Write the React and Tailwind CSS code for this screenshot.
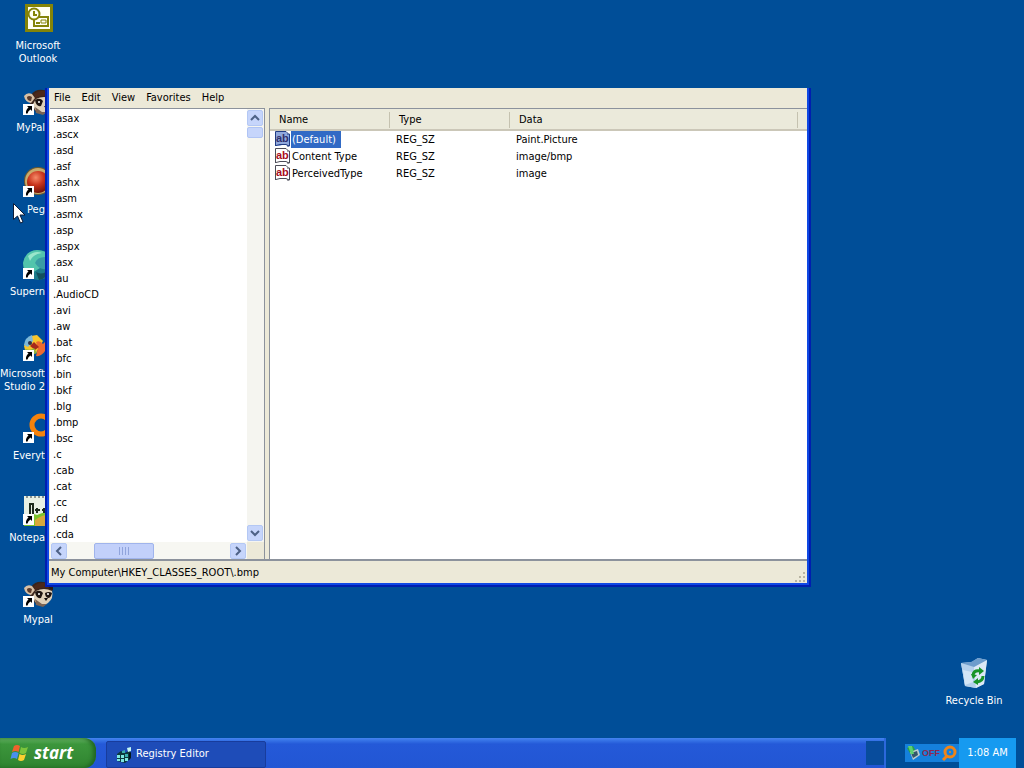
import { useState } from 'react';

const extensions = [
    '.asax', '.ascx', '.asd', '.asf', '.ashx', '.asm', '.asmx', '.asp', '.aspx',
    '.asx', '.au', '.AudioCD', '.avi', '.aw', '.bat', '.bfc', '.bin', '.bkf',
    '.blg', '.bmp', '.bsc', '.c', '.cab', '.cat', '.cc', '.cd', '.cda',
];

const values = [
    { name: '(Default)', type: 'REG_SZ', data: 'Paint.Picture' },
    { name: 'Content Type', type: 'REG_SZ', data: 'image/bmp' },
    { name: 'PerceivedType', type: 'REG_SZ', data: 'image' },
];

const OutlookIcon = () => (
    <svg width="32" height="32" viewBox="0 0 32 32">
        <rect x="3" y="1" width="28" height="28" fill="#848408" />
        <rect x="6" y="4" width="22" height="22" fill="#fffff4" />
        <g fill="#fffff4" stroke="#848408" strokeWidth="2">
            <rect x="12" y="14" width="14" height="9" />
            <path d="M19 17h5v3h-5z" strokeWidth="1" />
            <circle cx="12" cy="11" r="5.5" />
            <path d="M12 8v4h3M14 20h4" fill="none" />
        </g>
    </svg>
);

const RaccoonIcon = () => (
    <svg width="32" height="32" viewBox="0 0 32 32">
        <path d="M9 10q4-6 12-5l7 1 3 4-2 12-6 6-9-1-6-7z" fill="#3a241c" />
        <path d="M2 11q3-4 8-2l3 4-4 5q-6-1-7-7z" fill="#d8bfa4" />
        <path d="M5 12q2-2 5 0l-1 4q-4 0-4-4z" fill="#5c3c2c" />
        <path d="M14 14q8-4 16 0 2 7-4 12l-5 3-8-4-2-6z" fill="#e0d0b8" />
        <path d="M13 15q5-3 8 1l-2 5q-5 1-6-6zM23 16q4-2 7 0-1 5-4 5-3-1-3-5z" fill="#1f1410" />
        <path d="M12 9q7-6 17-1l1 4q-9-3-17 1z" fill="#4c281a" />
        <path d="M25 8l6-1v6l-3-1z" fill="#2a1a14" />
        <circle cx="17" cy="17" r="1" fill="#fff" />
        <circle cx="26" cy="17" r="1" fill="#fff" />
        <path d="M22 21h4l-2 3z" fill="#120c0a" />
        <path d="M13 22l7 5 5 0-4 3-7-2z" fill="#7c6454" />
    </svg>
);

const PegIcon = () => (
    <svg width="32" height="32" viewBox="0 0 32 32">
        <defs>
            <radialGradient id="peg" cx="0.4" cy="0.3" r="0.7">
                <stop offset="0" stopColor="#f58a68" />
                <stop offset="0.5" stopColor="#c8341c" />
                <stop offset="1" stopColor="#741408" />
            </radialGradient>
        </defs>
        <circle cx="16" cy="14" r="14" fill="#6b5a30" />
        <circle cx="16" cy="14" r="13" fill="#c9ab6c" />
        <circle cx="16" cy="15" r="11" fill="url(#peg)" />
    </svg>
);

const SupermiumIcon = () => (
    <svg width="32" height="32" viewBox="0 0 32 32">
        <circle cx="16" cy="16" r="15" fill="#1d7c8a" />
        <path d="M1 14Q3 2 15 1q12 0 16 12l-5 5-8 1-8 5q-9-2-9-10z" fill="#52c4ac" />
        <path d="M6 7q7-6 14-3-9 1-12 8z" fill="#9ae6cc" />
        <path d="M13 14q2-6 10-6 5 4 4 11-8 4-14-5z" fill="#3a9ca4" />
        <path d="M14 23q6 4 15-3-3 9-12 11z" fill="#14505c" />
    </svg>
);

const StudioIcon = () => (
    <svg width="32" height="32" viewBox="0 0 32 32">
        <path d="M2 15Q5 4 15 4l6 6-7 12-10 1z" fill="#f7c52c" />
        <path d="M2 14q1-8 8-10l1 6-5 6z" fill="#7cb8d8" />
        <path d="M14 11q4-2 7 2l8-8-1 12 3 7-8-4q-4 6-9 5l2-8z" fill="#ee6a30" />
        <path d="M12 11l5 5-4 3-5-4z" fill="#a8281c" />
        <circle cx="8" cy="12" r="2" fill="#2c3048" />
        <path d="M3 18q6 2 9-1l3 5q-8 4-12-4z" fill="#90b43c" />
    </svg>
);

const EverythingIcon = () => (
    <svg width="32" height="32" viewBox="0 0 32 32">
        <circle cx="19" cy="12" r="9" fill="none" stroke="#f5820c" strokeWidth="5" />
        <path d="M25 19l5 7" stroke="#f5820c" strokeWidth="5" />
    </svg>
);

const NotepadIcon = () => (
    <svg width="32" height="32" viewBox="0 0 32 32">
        <path d="M2 1h22l6 6v24H2z" fill="#e8f0e4" />
        <path d="M4 2h2m2 0h2m2 0h2m2 0h2m2 0h2" stroke="#8c9490" strokeWidth="2" />
        <path d="M2 22q7-5 13-2 8-4 15-2v13H2z" fill="#7cc42c" />
        <path d="M13 25q8-6 17-5v11H13z" fill="#d8a83c" />
        <path d="M8 9v11h3V9zM13 15h5m-3-2v5m5-3h5m-3-2v5" fill="none" stroke="#1d2a1c" strokeWidth="2" />
    </svg>
);

const ShortcutArrow = () => (
    <svg className="absolute left-[1px] top-[19px]" width="11" height="11" viewBox="0 0 11 11">
        <path d="M0 0h11v11H0z" fill="#fff" />
        <path d="M4 2h5v5L7.500 5.500Q5 7 4.500 9.500H3Q2.500 6 5.500 3.500z" fill="#000" />
    </svg>
);

const RecycleIcon = () => (
    <svg width="32" height="32" viewBox="0 0 32 32">
        <path d="M3 5l11-1 6-4 9 2-3 24-8 4-11-2z" fill="#c4dcf0" />
        <path d="M3 5l13 4 2 21-11-2z" fill="#b4d0ec" />
        <path d="M16 9l13-7-3 24-8 4z" fill="#dce8f6" />
        <path d="M3 5l10-1 7-4 9 2-13 7z" fill="#6d9ccc" />
        <path d="M5 12l9 2 1 10-8 3z" fill="#d4e6f6" />
        <g fill="none" stroke="#189428" strokeWidth="3">
            <path d="M15 17q1-5 7-4" />
            <path d="M25 18q0 5-6 6" />
        </g>
        <path d="M21 9l5 4-5 4zM20 20l-5 4 5 3zM13 16l6 1-4 4z" fill="#189428" />
    </svg>
);

const StringValueIcon = ({ selected }) => (
    <svg width="16" height="16" viewBox="0 0 16 16" className="block">
        <path d="M1 1h10l2 2h2v12h-2l-2-1H7l-2 1H1z" fill={selected ? '#90a8dc' : '#fff'} />
        <path d="M.5 15V.5H11l2 2M12 3h2.500v12H12M1 14.500l4-1h6l3 1.500" fill="none" stroke={selected ? '#213c84' : '#4c4c58'} />
        <text x="1" y="11" fontSize="11" fontWeight="bold" fontFamily="Liberation Sans, sans-serif" fill={selected ? '#30306c' : '#a80c1c'}>ab</text>
    </svg>
);

const WindowsFlag = () => (
    <svg width="20" height="20" viewBox="0 0 20 20">
        <path d="M4 3q3-2 6 0L8.500 9q-3-2-6.500 0z" fill="#f0622c" />
        <path d="M11 4q3 2 7 0l-2 6q-3 2-6.500 0z" fill="#7cc43c" />
        <path d="M2 10q3-2 6.500 0L7 16q-3-2-6.500 0z" fill="#4a90ec" />
        <path d="M9.500 11q3 2 6.500 0l-2 6q-3 2-6 0z" fill="#fcd030" />
    </svg>
);

const RegeditIcon = () => (
    <svg width="16" height="16" viewBox="0 0 16 16">
        <path d="M1 7l4-3 4 2 5-3v9l-5 4-8-2z" fill="#0c3a3c" />
        <path d="M1 8h3v3H1zm4 0h3v3H5zm-4 4h3v2H1zm4 0h3v3H5zm4-1h3v3H9z" fill="#7ce8e0" />
        <path d="M9 7h3v3H9zM6 4l3-1v3H6z" fill="#38b0ac" />
        <path d="M11 1l4-1v4l-3 1z" fill="#c4f8f4" />
        <path d="M13 6l2-1v6l-2 2z" fill="#04181c" />
    </svg>
);

// labels that run under the window are cut at its left edge
const desktopIcons = [
    { lines: ['Microsoft', 'Outlook'], Icon: OutlookIcon },
    { lines: ['MyPal'], Icon: RaccoonIcon, shortcut: true, covered: true },
    { lines: ['Peg'], Icon: PegIcon, shortcut: true, covered: true },
    { lines: ['Supern'], Icon: SupermiumIcon, shortcut: true, covered: true },
    { lines: ['Microsoft', 'Studio 2'], Icon: StudioIcon, shortcut: true, covered: true },
    { lines: ['Everyt'], Icon: EverythingIcon, shortcut: true, covered: true },
    { lines: ['Notepa'], Icon: NotepadIcon, shortcut: true, covered: true },
    { lines: ['Mypal'], Icon: RaccoonIcon, shortcut: true },
];

const DesktopIcon = ({ lines, Icon, shortcut, covered, height = 'h-[82px]' }) => (
    <button type="button" className={`flex w-[76px] shrink-0 flex-col items-center text-white ${height}`}>
        <span className="relative block h-8 w-8">
            <Icon />
            {shortcut && <ShortcutArrow />}
        </span>
        <span className={`mt-1 leading-[13px] ${covered ? 'w-[45px] self-start text-right' : 'text-center'}`}>
            {lines.map((line) => (
                <span key={line} className="block whitespace-nowrap">{line}</span>
            ))}
        </span>
    </button>
);

const chevrons = {
    up: 'M4 10l4-4 4 4',
    down: 'M4 6l4 4 4-4',
    left: 'M10 4L6 8l4 4',
    right: 'M6 4l4 4-4 4',
};

const ScrollButton = ({ direction }) => (
    <button
        type="button"
        aria-label={`Scroll ${direction}`}
        className="flex h-4 w-4 shrink-0 items-center justify-center rounded-xs border border-[#b4c8f4] bg-[#c6d5fb]"
    >
        <svg width="16" height="16" viewBox="0 0 16 16" className="shrink-0">
            <path d={chevrons[direction]} fill="none" stroke="#4d6185" strokeWidth="2" />
        </svg>
    </button>
);

const RegistryTree = () => (
    <div className="flex w-[215px] shrink-0 flex-col border-r border-t border-[#8c929c] bg-white">
        <div className="flex min-h-0 flex-1">
            <ul className="min-w-0 flex-1 overflow-hidden pt-[2px]">
                {extensions.map((ext) => (
                    <li key={ext} className="h-4 pl-[3px] leading-4">{ext}</li>
                ))}
            </ul>
            <div className="flex w-[17px] flex-col bg-[#f5f5f0] py-px">
                <ScrollButton direction="up" />
                <div className="mt-px h-[11px] w-4 rounded-xs border border-[#b0c4f4] bg-[#c6d5fb]" />
                <div className="flex-1" />
                <ScrollButton direction="down" />
            </div>
        </div>
        <div className="flex h-[17px] shrink-0">
            <div className="flex min-w-0 flex-1 items-center bg-[#f7f7f2] px-px">
                <ScrollButton direction="left" />
                <div className="ml-[27px] flex h-4 w-[60px] items-center justify-center gap-px rounded-xs border border-[#a0b4ec] bg-[#c2d0fa]">
                    {[0, 1, 2, 3].map((grip) => (
                        <span key={grip} className="mr-px h-2 w-px bg-[#90a4dc]" />
                    ))}
                </div>
                <div className="flex-1" />
                <ScrollButton direction="right" />
            </div>
            <div className="w-[17px] bg-[#ece9d8]" />
        </div>
    </div>
);

const ValueList = () => {
    const [selected, setSelected] = useState('(Default)');

    return (
        <div className="min-w-0 flex-1 border-l border-t border-[#8c929c] bg-white">
            <table className="w-full table-fixed border-collapse text-left">
                <thead>
                    <tr className="h-[21px] border-b-2 border-[#cbc7b8] bg-[#ebeadb]">
                        <th className="w-[120px] p-0 pt-px font-normal"><div className="border-r border-[#c5c2b0] pl-[9px] leading-4">Name</div></th>
                        <th className="w-[120px] p-0 pt-px font-normal"><div className="border-r border-[#c5c2b0] pl-[9px] leading-4">Type</div></th>
                        <th className="p-0 pr-[9px] pt-px font-normal"><div className="border-r border-[#c5c2b0] pl-[9px] leading-4">Data</div></th>
                    </tr>
                </thead>
                <tbody>
                    {values.map((value) => (
                        <tr key={value.name} onClick={() => setSelected(value.name)} className="h-[17px] leading-[17px]">
                            <td className="p-0 pl-[5px]">
                                <div className="flex">
                                    <StringValueIcon selected={selected === value.name} />
                                    <span className={selected === value.name ? 'bg-[#316ac5] pl-px pr-[5px] text-white' : 'pl-px pr-[5px]'}>
                                        {value.name}
                                    </span>
                                </div>
                            </td>
                            <td className="p-0 pl-[6px]">{value.type}</td>
                            <td className="p-0 pl-[6px]">{value.data}</td>
                        </tr>
                    ))}
                </tbody>
            </table>
        </div>
    );
};

const RegistryWindow = () => (
    <section
        aria-label="Registry Editor"
        className="absolute bottom-[151px] left-[45px] right-[213px] top-[88px] flex border-x-2 border-b-2 border-[#001eb0] bg-[#0f48e4] px-[2px] pb-[2px]"
    >
        <div className="flex min-w-0 flex-1 flex-col bg-[#ece9d8]">
            <nav className="flex h-5 shrink-0 items-center gap-[11px] pl-[5px]">
                {['File', 'Edit', 'View', 'Favorites', 'Help'].map((item) => (
                    <button key={item} type="button" className="leading-4">{item}</button>
                ))}
            </nav>
            <div className="flex min-h-0 flex-1 gap-1 border-b-2 border-[#8c929c] pl-px">
                <RegistryTree />
                <ValueList />
            </div>
            <footer className="flex h-[22px] shrink-0 justify-between pl-[2px]">
                <span className="pt-1">My Computer\HKEY_CLASSES_ROOT\.bmp</span>
                <svg width="12" height="12" viewBox="0 0 12 12" className="self-end">
                    <path d="M8 1h2v2H8zM4 5h2v2H4zm4 0h2v2H8zM0 9h2v2H0zm4 0h2v2H4zm4 0h2v2H8z" fill="#b8b4a2" />
                </svg>
            </footer>
        </div>
    </section>
);

const Taskbar = () => (
    <footer className="flex h-[30px] shrink-0 text-white">
        <div className="flex min-w-0 flex-1 border-r-2 border-[#2c68dc] bg-linear-to-b from-[#4484f0] via-[#2459d8] via-20% to-[#2256d4]">
            <button
                type="button"
                className="flex w-24 items-center gap-1 rounded-r-xl bg-linear-to-b from-[#68b868] via-[#3c963c] via-20% to-[#2f8430] pl-[10px] font-['Open_Sans',sans-serif] text-[17px] font-bold italic leading-5 shadow-[inset_-3px_0_4px_#206420]"
            >
                <WindowsFlag />
                start
            </button>
            <button
                type="button"
                className="ml-[10px] mt-[3px] flex w-40 items-center gap-1 rounded-xs border border-[#183c9c] bg-[#1e4cb8] pl-[9px]"
            >
                <RegeditIcon />
                Registry Editor
            </button>
            <div className="flex-1" />
            <div className="my-[3px] w-[18px] bg-[#084c9c]" />
        </div>
        <div className="ml-[19px] flex w-[54px] items-center">
            <div className="flex h-[18px] w-full items-center justify-between bg-[#1580dc] px-[2px]">
                <svg width="14" height="16" viewBox="0 0 14 16">
                    <path d="M0 3l6-2 3 5-5 4z" fill="#28a048" />
                    <path d="M3 7l8-3 2 6-7 5z" fill="#c0ccd0" />
                    <path d="M4 8l6-2 1 4-5 3z" fill="#34586c" />
                    <path d="M1 1l4 0 2 8-3 0z" fill="#5cd070" />
                </svg>
                <span className="font-['Liberation_Sans_Narrow','Liberation_Sans',sans-serif] text-[9px] font-bold leading-4 text-[#8c2850]">OFF</span>
                <svg width="16" height="16" viewBox="0 0 16 16">
                    <circle cx="9" cy="7" r="5" fill="none" stroke="#f08418" strokeWidth="3" />
                    <path d="M6 11l-4 4" stroke="#f08418" strokeWidth="3" />
                    <circle cx="9" cy="7" r="1" fill="#f08418" />
                </svg>
            </div>
        </div>
        <time className="mr-2 flex w-[57px] items-center justify-center bg-[#169af0]">1:08 AM</time>
    </footer>
);

const App = () => (
    <div className="flex h-screen flex-col overflow-hidden bg-[#004e98] font-['DejaVu_Sans_Condensed','DejaVu_Sans',sans-serif] text-[11px] text-black">
        <main className="relative min-h-0 flex-1">
            <div className="flex h-full items-end justify-between">
                <div className="flex flex-col self-start pt-[3px]">
                    {desktopIcons.map((icon) => (
                        <DesktopIcon key={icon.lines.join(' ')} {...icon} />
                    ))}
                </div>
                <div className="mr-3">
                    <DesktopIcon lines={['Recycle Bin']} Icon={RecycleIcon} height="h-20" />
                </div>
            </div>
            <RegistryWindow />
            <svg className="absolute left-[13px] top-[203px]" width="12" height="21" viewBox="0 0 12 21">
                <path d="M.5.5v16l4-3.500 3 7 2.500-1-3-7h5z" fill="#fff" stroke="#0c1c38" strokeWidth="1" />
            </svg>
        </main>
        <Taskbar />
    </div>
);

export default App;
